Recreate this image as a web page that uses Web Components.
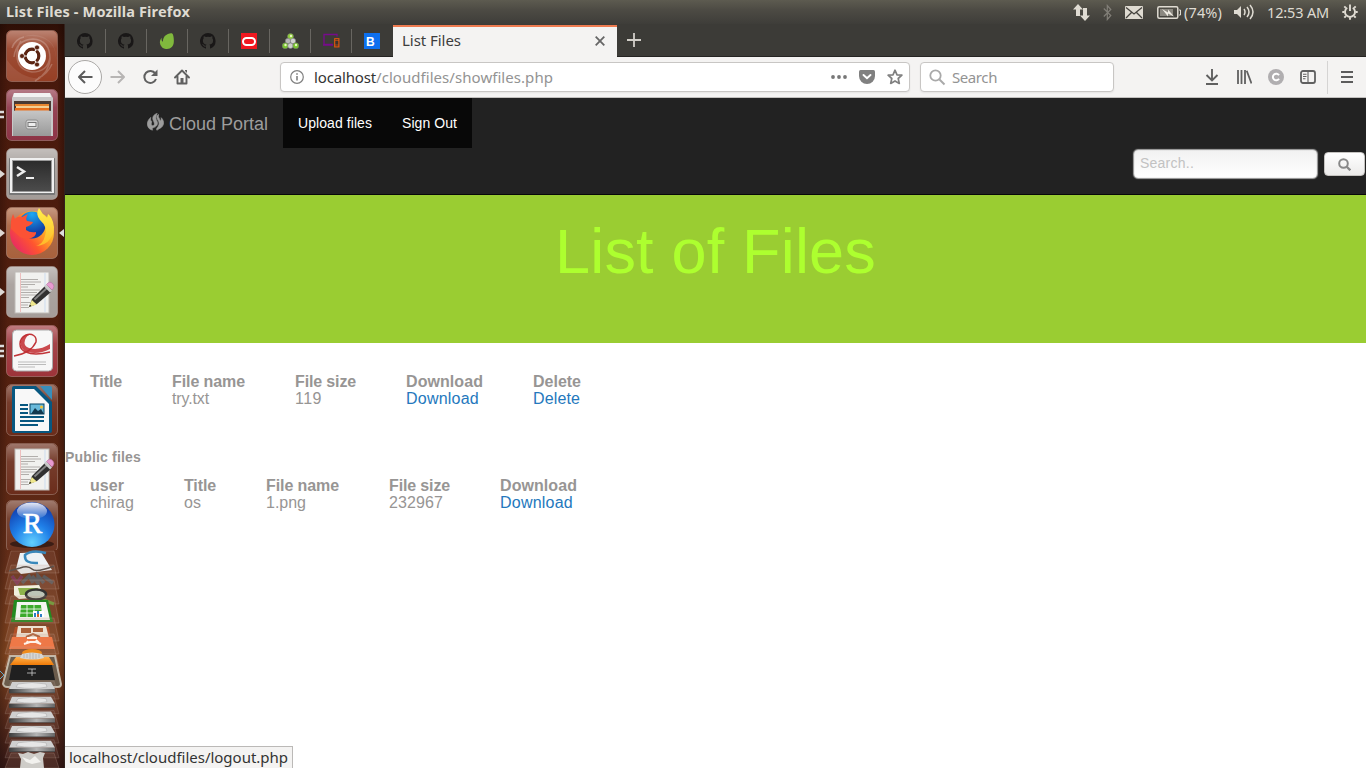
<!DOCTYPE html>
<html lang="en">
<head>
<meta charset="utf-8">
<title>List Files</title>
<style>
html,body{margin:0;width:1366px;height:768px;overflow:hidden;background:#fff}
</style>
</head>
<body>
<desk-top></desk-top>
<script>
const define = (name, html, init) => {
  const t = document.createElement('template');
  t.innerHTML = html;
  customElements.define(name, class extends HTMLElement {
    connectedCallback() {
      if (this.shadowRoot) return;
      this.attachShadow({mode: 'open'}).append(t.content.cloneNode(true));
      if (init) init.call(this, this.shadowRoot);
    }
  });
};

/* Text tracked so that it fills the width given in its "w" attribute. */
define('fit-text', `<style>:host{display:block;white-space:pre;flex:none}span{display:inline-block}</style><span><slot></slot></span>`, function (r) {
  const w = +this.getAttribute('w'), s = r.querySelector('span');
  this.style.width = w + 'px';
  s.style.letterSpacing = (w - s.getBoundingClientRect().width) / this.textContent.length + 'px';
});

const github = '<path fill="#191717" fill-rule="evenodd" d="M8 0a8 8 0 0 0-2.5 15.6c.4.1.5-.2.5-.4v-1.6c-2.2.5-2.7-1-2.7-1-.4-.9-.9-1.1-.9-1.1-.7-.5.1-.5.1-.5.8.1 1.200.8 1.200.8.7 1.300 1.900.9 2.300.7.1-.5.3-.9.5-1.100-1.800-.2-3.600-.9-3.600-4 0-.9.3-1.600.8-2.100-.1-.2-.4-1 .1-2.100 0 0 .7-.2 2.200.8a7.600 7.600 0 0 1 4 0c1.500-1 2.200-.8 2.200-.8.4 1.100.2 1.900.1 2.100.5.6.8 1.300.8 2.100 0 3.100-1.900 3.700-3.700 3.900.3.3.6.8.6 1.500v2.200c0 .2.1.5.5.4A8 8 0 0 0 8 0z"/>';
const paper = `<rect x="15" y="6" width="34" height="41" fill="#f1f1ef" stroke="#bdbab6"/><path d="M20.500 7v39" stroke="#eba9a9" stroke-width=".7"/><path d="M45 7v39" stroke="#bcd3f0" stroke-width=".7"/><path d="M21 13.500h17M21 16h20M21 18.500h14M21 21h7M21 24h19M21 26.500h16M21 29h20M21 31.500h8M21 36.500h9M21 39h7M21 41.500h8" stroke="#b1aeab" stroke-width="1.200"/><path d="M29 41l3-8 13-13 6 6-14 12z" fill="#303030"/><path d="M34.500 33.500l12.500-11.500" stroke="#858585" stroke-width="1.800"/><path d="M29 41l2.800-7 5 4.500z" fill="#efe78c"/><path d="M29 41l1-2.500 1.500 1.500z" fill="#222"/><path d="M44 20.500l2-2 6 6-2 2z" fill="#c9c9c9"/><path d="M46.500 18.500q3-4 6-1t-.5 6.500z" fill="#e79ad0" stroke="#b26fa0" stroke-width=".6"/>`;
const tile = (c, k) => `<rect x="6.500" y=".5" width="51" height="51" rx="5" fill="${c}" stroke="#fff" stroke-opacity=".25"/><rect x="7" y="1" width="50" height="50" rx="5" fill="url(#sh)"/>${k}`;
const pipsOne = '<path d="M0 22l5 4-5 4z" fill="#ddd8d4"/>';
const defs = `<defs><linearGradient id="sh" x2="0" y2="1"><stop stop-color="#fff" stop-opacity=".35"/><stop offset=".35" stop-color="#fff" stop-opacity=".08"/><stop offset="1" stop-color="#fff" stop-opacity="0"/></linearGradient><linearGradient id="gy" x2="0" y2="1"><stop stop-color="#c6c6c6"/><stop offset="1" stop-color="#999"/></linearGradient><linearGradient id="fx" x1="1" x2="0" y2=".8"><stop stop-color="#ffe63d"/><stop offset=".35" stop-color="#ffae24"/><stop offset=".65" stop-color="#ff552f"/><stop offset="1" stop-color="#e5256a"/></linearGradient><linearGradient id="fl" x2="0" y2="1"><stop stop-color="#fff14d"/><stop offset="1" stop-color="#ffb728"/></linearGradient><radialGradient id="fb" cx=".5" cy=".1" r="1"><stop stop-color="#1aa9f4"/><stop offset=".7" stop-color="#123fa5"/></radialGradient><radialGradient id="rb" cx=".5" cy=".9" r=".85"><stop stop-color="#62d0ff"/><stop offset=".5" stop-color="#1f7fe8"/><stop offset="1" stop-color="#123fae"/></radialGradient><linearGradient id="rg" x2="0" y2="1"><stop stop-color="#fff" stop-opacity=".9"/><stop offset="1" stop-color="#fff" stop-opacity=".05"/></linearGradient><linearGradient id="dk" x2="0" y2="1"><stop stop-color="#2b2b2b"/><stop offset="1" stop-color="#4c4c4c"/></linearGradient><linearGradient id="dv"><stop stop-color="#3d3d3d"/><stop offset=".6" stop-color="#b5b5b5"/><stop offset="1" stop-color="#666"/></linearGradient><linearGradient id="og" x2="0" y2="1"><stop stop-color="#ffb04a"/><stop offset="1" stop-color="#ee7a08"/></linearGradient></defs>`;

let drives = '';
for (let i = 0; i < 5; i++) {
  const y = 133 + i * 14.700;
  drives += `<path d="M11 ${y - 2}L54 ${y - 2}L59 ${y + 16}H5z" fill="#a78a80" fill-opacity=".14" stroke="#bda79f" stroke-opacity=".3" stroke-width=".7"/><path d="M12 ${y - 1}H51L55 ${y + 6}H9z" fill="#cfcfcf"/><path d="M18 ${y + 1}q14-3 28 0l1 3q-14 3-31 0z" fill="#e6e6e6" stroke="#adadad" stroke-width=".6"/><path d="M9 ${y + 6}H55v4H9z" fill="url(#dv)"/><path d="M9 ${y + 9.500}H55v.7H9z" fill="#444"/>`;
}
const shelf = (y, h) => `<path d="M11 ${y}H54L59 ${y + h}H5z" fill="#b48a78" fill-opacity=".16" stroke="#c9a99b" stroke-opacity=".3" stroke-width=".8"/>`;

const ICONS = {
  github: [16, 16, github],
  envato: [16, 16, '<path fill="#80b93d" d="M13.200.4C12-.4 8 .6 5.800 3 4 5 3.900 8 3.900 8.600c-.1.3-.4.200-.8-.5C2.400 7 2.500 6 2.800 4.800 1.400 6.300.8 8 .9 9.800A6.600 6.600 0 0 0 8 16c4 0 6.600-3 6.800-7C15 5.500 14.500 1.200 13.200.4z"/>'],
  oracle: [16, 16, '<path fill="#f01820" d="M0 0h16v16H0z"/><rect x="2" y="5" width="12" height="7" rx="3.500" fill="none" stroke="#fff" stroke-width="2"/>'],
  balls: [17, 16, '<g stroke="#777" stroke-width=".5"><circle cx="8.500" cy="3.500" r="3" fill="#8fce3c"/><circle cx="6" cy="8" r="2.700" fill="#b5b5b5"/><circle cx="11" cy="8" r="2.700" fill="#d0d0d0"/><circle cx="3.200" cy="12.800" r="3" fill="#79c52f"/><circle cx="8.500" cy="12.800" r="2.700" fill="#ccc"/><circle cx="13.800" cy="12.800" r="3" fill="#79c52f"/></g><g fill="#e6f7bd"><circle cx="9" cy="3" r="1.200"/><circle cx="3.500" cy="12" r="1.200"/><circle cx="14" cy="12" r="1.200"/></g>'],
  devices: [17, 15, '<path fill="none" stroke="#770b8c" stroke-width="1.300" d="M10 11.500H1V1.500h13v2M0 12h10"/><rect x="11.700" y="5.700" width="4.200" height="8.200" fill="#38332e" stroke="#e5570c" stroke-width="1.100"/><path d="M12 7.500h4M12 12h4" stroke="#e5570c" stroke-width=".6"/>'],
  plus: [14, 14, '<path d="M7 0v14M0 7h14" stroke="#d2cfc9" stroke-width="1.800"/>'],
  close: [10, 10, '<path d="M.7.7l8.600 8.600M9.300.7L.7 9.300" stroke="#666" stroke-width="1.800"/>'],
  back: [16, 14, '<path d="M8 1L2 7l6 6M2 7h13.500" fill="none" stroke="#5c5c5c" stroke-width="2" stroke-linejoin="round"/>'],
  fwd: [16, 14, '<path d="M8 1l6 6-6 6M14 7H.5" fill="none" stroke="#b7b5b4" stroke-width="2" stroke-linejoin="round"/>'],
  reload: [16, 16, '<path d="M13.300 4.500A6 6 0 1 0 14 10" fill="none" stroke="#606060" stroke-width="2"/><path d="M15.500.5v6.500H9z" fill="#606060"/>'],
  home: [16, 16, '<path d="M1 8.500L8 1.500l7 7M3.500 7.500v7h9v-7" fill="none" stroke="#606060" stroke-width="1.900" stroke-linejoin="round" stroke-linecap="round"/><path d="M6.500 9h3v6h-3zM11 1h2v3l-2-2z" fill="#606060"/>'],
  info: [14, 14, '<circle cx="7" cy="7" r="6.300" fill="none" stroke="#808080" stroke-width="1.200"/><path d="M7 6v4.500M7 3.200v1.500" stroke="#808080" stroke-width="1.600"/>'],
  dots: [16, 4, '<g fill="#777"><circle cx="2" cy="2" r="1.900"/><circle cx="8" cy="2" r="1.900"/><circle cx="14" cy="2" r="1.900"/></g>'],
  pocket: [16, 14, '<path d="M1.500 0h13Q16 0 16 1.500V6a8 8 0 0 1-16 0V1.500Q0 0 1.500 0z" fill="#808080"/><path d="M4.500 5L8 8.300 11.500 5" fill="none" stroke="#fff" stroke-width="1.900" stroke-linecap="round"/>'],
  star: [16, 16, '<path d="M8 1.200l2 4.600 4.900.4-3.700 3.300 1.100 4.900L8 11.900l-4.300 2.500 1.100-4.900L1.100 6.200 6 5.800z" fill="none" stroke="#808080" stroke-width="1.700" stroke-linejoin="round"/>'],
  mag: [17, 17, '<circle cx="6.500" cy="6.500" r="5.200" fill="none" stroke="#a9a9a9" stroke-width="1.800"/><path d="M10.500 10.500l5 5" stroke="#a9a9a9" stroke-width="2"/>'],
  down: [14, 16, '<path d="M7 0v11M1.500 6L7 11.500 12.500 6M1 15h12" fill="none" stroke="#606060" stroke-width="1.900"/>'],
  lib: [16, 14, '<path d="M2 0v14M5.500 0v14M9 0v14" stroke="#606060" stroke-width="1.800"/><path d="M10.700 .8L15.500 13.500" stroke="#606060" stroke-width="1.800"/>'],
  sync: [16, 16, '<circle cx="8" cy="8" r="8" fill="#b0aeb0"/><path d="M11 6.300A3.300 3.300 0 1 0 11 9.700" fill="none" stroke="#fff" stroke-width="2"/>'],
  side: [16, 14, '<rect x="1" y="1" width="14" height="12" rx="2" fill="none" stroke="#606060" stroke-width="1.800"/><path d="M8 1v12M3 4.200h3.500M3 6.500h3.500M3 8.800h2.500" stroke="#606060" stroke-width="1.100"/>'],
  menu: [12, 12, '<path d="M0 1h12M0 6h12M0 11h12" stroke="#5c5c5c" stroke-width="1.800"/>'],
  net: [17, 17, '<path fill="#dfdbd2" d="M5 0l5 5.500H7V12H3V5.500H0zM12 17l5-5.500h-3V4h-4v7.500H7z"/>'],
  bt: [9, 17, '<path d="M.8 4.500l7 7-3.500 4v-14l3.500 4-7 7" fill="none" stroke="#827f78" stroke-width="1.200"/>'],
  mail: [18, 13, '<rect width="18" height="13" rx="1" fill="#dfdbd2"/><path d="M1 1.500l8 6.500 8-6.500M1 12l5.500-5.500M17 12l-5.500-5.500" fill="none" stroke="#45433e" stroke-width="1.300"/>'],
  batt: [24, 13, '<rect x=".8" y=".8" width="20" height="11.400" rx="1.500" fill="none" stroke="#dfdbd2" stroke-width="1.500"/><rect x="3" y="3" width="13" height="7" fill="#8b8880"/><path d="M22 4h1.500v5H22" stroke="#dfdbd2" fill="none"/><path d="M5 3l6 3.500V3.500l6 7-6-3v3z" fill="#eeeae1"/>'],
  vol: [20, 18, '<path d="M0 7h3l4-4v12l-4-4H0z" fill="#dfdbd2"/><path d="M10 6q2 3 0 6M13 4q4 5 0 10M16 2q6 7 0 14" fill="none" stroke="#dfdbd2" stroke-width="1.500"/>'],
  gear: [18, 18, '<path d="M6.200 4.800a5 5 0 1 0 5.600 0M9 1.500v6.500" fill="none" stroke="#dfdbd2" stroke-width="1.900"/><path d="M4.800 4.800L3.300 3.300M13.200 4.800l1.500-1.500M3.500 9H1.300M14.500 9h2.200M5 13l-1.700 1.700M13 13l1.700 1.700M9 14.500v2.200" stroke="#dfdbd2" stroke-width="1.900"/>'],
  fire: [17, 18, '<g fill="#9d9d9d" stroke="#9d9d9d" stroke-width=".7" stroke-linejoin="round"><path d="M10.200.4C6.800 1.500 5 4 6.200 7.200 7.300 9.500 8 11 7 12.200c-1 1-2.600.6-2.800-.9-.1-1 .2-1.900.6-2.600C3.400 8 3.300 6 3.800 4.500 1.300 6.500.1 9 .5 12c.4 3 2.500 4.800 5.200 5.100-1-1-.6-2 .9-2.500 3-.9 4.500-3 3.600-6C9.300 6.400 7.800 4.800 10.200.4z"/><path d="M9.800 4.200c.3 2.300 2 3.200 2.300 5.800.3 3-2 4.300-2.500 6-.1.600.1.900.5 1.300.3-.5.9-1 1.900-1.500 3.200-1.300 4.800-3.800 4.500-6.600-.3-2-1.100-3.300-2.300-4.500.2 1.500 0 2.600-1.100 3.200C13 5.500 10.600 4.500 11.500 1.500 10.300 2.300 9.700 3 9.800 4.200z"/></g>'],
  find: [13, 13, '<circle cx="5.500" cy="5.500" r="4.300" fill="none" stroke="#888" stroke-width="2"/><path d="M8.700 8.700l3.600 3.600" stroke="#888" stroke-width="2.300"/>'],
  ubuntu: [65, 52, tile('#963f25', '<g fill="none" stroke="#fff" stroke-opacity=".22" stroke-width="1.500"><path d="M14 27Q16 10 33 9q17 1 17 20-1 14-15 22M50 27q-2 15-18 15-15-2-15-17 0-8 4-14M12 18q3-9 12-11M52 34q-5 11-14 14"/></g><path d="M7 30q14 20 35 18l-6 3H12q-5 0-5-5zM22 7q19-7 31 8 4 8 3 18 1-18-11-24-10-5-23-2z" fill="#fff" fill-opacity=".09"/><circle cx="32" cy="26" r="14" fill="#fff"/><circle cx="32" cy="26" r="6.800" fill="none" stroke="#5b2412" stroke-width="3.200"/><path d="M32 26H19M32 26l7-11M32 26l7 11" stroke="#fff" stroke-width="1.200"/><circle cx="32" cy="26" r="5" fill="#fff"/><g fill="#5b2412" stroke="#fff" stroke-width=".7"><circle cx="22" cy="26" r="2.500"/><circle cx="37" cy="17.500" r="2.500"/><circle cx="37" cy="34.500" r="2.500"/></g>')],
  files: [65, 52, tile('#8d3446', '<path d="M14 4h36l3 5v38H12V9z" fill="#c9c9c9"/><path d="M14 4h36l1 4H13z" fill="#f2f2f2"/><path d="M14 12h37v12H14z" fill="#493a33"/><path d="M15 15h34v2H15z" fill="#e88630"/><path d="M16 17h33v2H16z" fill="#f4cf93"/><path d="M15 19h34v4H15z" fill="#e8701d"/><path d="M13 22l3-.5h32l3 .5v25H13z" fill="url(#gy)"/><rect x="26" y="31" width="12" height="9" rx="2" fill="#d9d9d9" stroke="#8d8d8d"/><rect x="28" y="33.500" width="8" height="4" fill="#eee" stroke="#777"/>') + '<path d="M0 23h4M0 28h4" stroke="#ddd" stroke-width="2.500"/>'],
  term: [65, 52, tile('#a39c98', '<rect x="9" y="10" width="46" height="37" rx="1" fill="#777"/><rect x="10" y="10" width="44" height="35" fill="#f0f0f0"/><rect x="12.500" y="12.500" width="39" height="31" fill="url(#dk)" stroke="#999"/><path d="M17 19l7 4.500-7 4.500" fill="none" stroke="#eee" stroke-width="2.500"/><path d="M26 30h8" stroke="#eee" stroke-width="2"/>') + pipsOne],
  firefox: [65, 52, tile('#a8613d', '<circle cx="32" cy="26" r="22" fill="url(#fx)"/><circle cx="32" cy="18" r="13.500" fill="url(#fb)"/><path d="M13 7l2 5q3-3 7-2l6-3q-3 5-1 7l6 1q-1 3-7 5v3q4 3 10 2 1 5-8 7-5 0-8-2l-9-8q-1-8 2-15z" fill="#fb5235"/><path d="M39 1q-4 6 1 12 8 7 5 16-2 8-9 10 10-1 14-7 6-7 3-17-2-6-5-8l-1 4q-5-4-8-10z" fill="url(#fl)"/>') + pipsOne + '<path d="M64 22l-5 4 5 4z" fill="#ddd"/>'],
  edit: [65, 52, tile('#a59d99', paper) + pipsOne],
  pdf: [65, 52, tile('#9d343a', '<rect x="12.500" y="5" width="40" height="41" rx="4" fill="#f7f7f7" stroke="#aaa"/><path d="M14 31Q31 28 36 17c1-6-4-9-10-7-8 4-8 14 0 17q8 4 24 0" fill="none" stroke="#c03539" stroke-width="1.500"/><path d="M33 10q-9-3-12 6-2 9 7 11 10 3 22-3v-5q-11 7-21 4-6-2-4-8 2-6 8-5z" fill="#c22c30" opacity=".85"/><path d="M18 37h28M18 39.500h28M18 42h17" stroke="#bbb"/>') + '<path d="M0 21h4M0 26h4M0 31h4" stroke="#ddd" stroke-width="2.500"/>'],
  writer: [65, 52, tile('#6b2c1a', '<path d="M14 2h22l16 16v29q0 2-2 2H14q-2 0-2-2V4q0-2 2-2z" fill="#075780"/><path d="M15 5h19l15 15v27H15z" fill="#f8f8f8"/><path d="M40 2h10q2 0 2 2v12z" fill="#398eba"/><path d="M20 21h8M20 25h8M20 29h8M20 33h24M20 37h24M20 41h18" stroke="#075780" stroke-width="2"/><rect x="30" y="20" width="14" height="10" fill="#69b9da" stroke="#074564"/><path d="M31 30l4-6 3 3 3-2 3 5z" fill="#12384e"/><circle cx="41.500" cy="23" r="1.500" fill="#f6c12f"/>')],
  edit2: [65, 52, tile('#6b2d1b', paper)],
  rstudio: [65, 50, tile('#6c3320', '') + '<ellipse cx="32" cy="44" rx="22" ry="4" fill="#3b1d15"/><circle cx="32" cy="24.500" r="22.500" fill="url(#rb)"/><ellipse cx="32" cy="11" rx="15" ry="8.500" fill="url(#rg)"/><text x="32.500" y="33" font-family="Liberation Serif,serif" font-size="29" fill="#fff" stroke="#fff" stroke-width=".7" text-anchor="middle">R</text>'],
  stack: [65, 218, shelf(1, 22) + '<path d="M20 3l21-1 11 18-31 4-5-5z" fill="#edf2f5"/><path d="M46 3q-14-4-21 2-1 9 13 8" fill="none" stroke="#3988bb" stroke-width="2.500"/><path d="M9 21l11-3q8-3 12 1t22-3" fill="none" stroke="#4c4743" stroke-width="1.600"/>' + shelf(15, 24) + '<path d="M12 26l5 7 5-7M22 33l7-7 4 7M32 26l6 7v-7l6 7M43 26l10 7" fill="none" stroke="#5d5b5c" stroke-width="3.500"/><path d="M12 26l5 7 5-7" fill="none" stroke="#843853" stroke-width="3"/>' + shelf(30, 24) + '<path d="M14 36l25-1 6 12-26 2-5-4z" fill="#f1efdc"/><path d="M18 38h20l4 7H20z" fill="#8eb34b"/><path d="M41 49l13 5" stroke="#6c9d36" stroke-width="3"/><ellipse cx="36" cy="44.500" rx="10" ry="5" fill="#bdc5b8" stroke="#333" stroke-width="2.500"/>' + shelf(46, 27) + '<path d="M14 50h34l5 22H11z" fill="#238a20"/><path d="M17 52h29l4 18H15z" fill="#f4f6f1"/><path d="M21 55h20l1 12H20z" fill="#3caa2b"/><path d="M20 59h21M20 63h22M27 55v12M34 55v12" stroke="#fff" stroke-width=".8"/><path d="M33 61h11v6H33z" fill="#fff"/><path d="M35 67v-4M38 67v-6M41 67v-3" stroke="#2c7fc6" stroke-width="2"/><path d="M38 67v-3" stroke="#d36425" stroke-width="2"/>' + shelf(68, 23) + '<path d="M15 77h34l2 13H12z" fill="#b04f27"/><path d="M18 76h28l3 12H16z" fill="#eee2d2"/><path d="M21 78h10v5H21zM33 78h10v4H33z" fill="#ac6037"/><path d="M26 87l7-3 7 3" fill="none" stroke="#ae6037" stroke-width="2"/>' + shelf(84, 20) + '<path d="M12 87h40l3 12H9z" fill="#ee7847"/><path d="M24 94l6-2 6 0 5 2M27 88h10M28 91l-2 3M36 90l3 3" fill="none" stroke="#fff2e8" stroke-width="2.200"/>' + shelf(97, 20) + '<path d="M10 106h45l6 28q0 3-3 3H7q-3 0-4-3z" fill="#6b5c4c" stroke="#dedbce" stroke-width="2" stroke-opacity=".75"/><path d="M12 115h40l3 15H9z" fill="#202020"/><path d="M16 107h33l5 8H10z" fill="url(#og)"/><ellipse cx="32" cy="103" rx="10" ry="4" fill="#ef8c1d"/><path d="M22 104q10-3 20 0l2 4q-11 3-24 0z" fill="#d6d6d4"/><path d="M24 104v4M27 104v4M30 103v6M33 103v6M36 104v5M39 104v4" stroke="#aaa" stroke-width=".7"/><path d="M28 119h8M32 119v7M27 123h9" stroke="#ccc" stroke-width=".8"/><path d="M0 121l4 4-4 4" stroke="#60a6c5" fill="none"/>' + drives + shelf(203, 15) + '<path d="M18 203l5 1 5-2 6 2 6-2 5 1-2 5 1 10H20l1-9z" fill="#ceccc8"/><path d="M22 207l8 3 5-4 6 6-9 2-6-2z" fill="#f2f1ee"/>']
};

define('ui-icon', `<style>:host{display:block;flex:none;line-height:0}svg{display:block}</style>`, function (r) {
  const [w, h, d] = ICONS[this.getAttribute('name')];
  const box = document.createElement('div');
  box.innerHTML = `<svg width="${w}" height="${h}" viewBox="0 0 ${w} ${h}">${w === 65 ? defs : ''}${d}</svg>`;
  r.append(box.firstChild);
});

define('top-panel', `<style>
:host{display:flex;align-items:center;height:24px;padding:0 7px 0 6px;box-sizing:border-box;background:linear-gradient(#5d5b50,#4d4b44 40%,#3e3d39);color:#dfdbd2;font:15px "Noto Sans",sans-serif;line-height:24px}
.t{font-weight:700;font-size:14.500px;margin-right:auto;margin-top:-2px}
ui-icon{margin-left:12px}
.p{font-size:14.500px;margin-top:-1px}
</style><fit-text class="t" w="184">List Files - Mozilla Firefox</fit-text>
<ui-icon name="net"></ui-icon><ui-icon name="bt" style="margin-left:13px"></ui-icon><ui-icon name="mail" style="margin-left:13px"></ui-icon><ui-icon name="batt" style="margin-left:14px"></ui-icon><fit-text class="p" w="38" style="margin-left:3px">(74%)</fit-text><ui-icon name="vol"></ui-icon><fit-text class="p" w="62" style="margin-left:13px">12:53 AM</fit-text><ui-icon name="gear"></ui-icon>`);

define('app-launcher', `<style>
:host{display:flex;flex-direction:column;width:65px;box-sizing:border-box;padding-top:6px;gap:7px;background:linear-gradient(90deg,#0003,transparent 8px 57px,#0004),linear-gradient(#2e0f06,#48190c 7%,#54200f 50%,#632d18 72%,#80441f 85%,#582a1a 93%,#351815);overflow:hidden;box-shadow:inset -1px 0 #32221d}
</style>${['ubuntu','files','term','firefox','edit','pdf','writer','edit2'].map(n => `<ui-icon name="${n}"></ui-icon>`).join('')}<ui-icon name="rstudio" style="margin-top:-2px"></ui-icon><ui-icon name="stack" style="margin-top:-7px"></ui-icon>`);

define('pinned-tab', `<style>:host{display:flex;align-items:center;justify-content:center;width:41px;height:32px;box-sizing:border-box;position:relative;padding:1px 1px 0 0}i{position:absolute;right:0;top:5px;width:1px;height:24px;background:#686661}:host([last]) i{display:none}</style><slot></slot><i></i>`);

define('tab-strip', `<style>
:host{display:flex;height:33px;box-sizing:border-box;background:#3c3b37;border-bottom:1px solid #252422}
.a{display:flex;align-items:center;width:224px;height:32px;padding:0 12px 0 9px;box-sizing:border-box;background:#f4f3f2;border-top:2px solid #ee7b50;margin:1px 0 -1px;font:15px "Noto Sans",sans-serif;color:#3d3d3d;justify-content:space-between}
.a fit-text{margin-top:-4px}
.a ui-icon{margin-top:-2px}
.b{display:flex;align-items:flex-end;padding:0 0 0 2px;box-sizing:border-box;width:16px;height:16px;background:#0d6fee;color:#fff;font:bold 12px/13px "Liberation Sans",sans-serif}
.plus{margin:9px 0 0 10px}
</style>
<pinned-tab><ui-icon name="github"></ui-icon></pinned-tab><pinned-tab><ui-icon name="github"></ui-icon></pinned-tab><pinned-tab><ui-icon name="envato"></ui-icon></pinned-tab><pinned-tab><ui-icon name="github"></ui-icon></pinned-tab><pinned-tab><ui-icon name="oracle"></ui-icon></pinned-tab><pinned-tab><ui-icon name="balls"></ui-icon></pinned-tab><pinned-tab><ui-icon name="devices"></ui-icon></pinned-tab><pinned-tab last><span class="b">B</span></pinned-tab>
<div class="a"><fit-text w="59">List Files</fit-text><ui-icon name="close"></ui-icon></div><ui-icon class="plus" name="plus"></ui-icon>`);

define('nav-toolbar', `<style>
:host{display:flex;align-items:center;height:41px;box-sizing:border-box;background:#f4f3f2;border-bottom:1px solid #c2c0be;font:15px "Noto Sans",sans-serif;color:#333;padding-left:3px}
.back{display:grid;place-items:center;width:34px;height:34px;box-sizing:border-box;border:1px solid #aaa8a6;border-radius:50%;background:#fcfcfc}
.f{display:flex;align-items:center;height:30px;box-sizing:border-box;background:#fff;border:1px solid #c8c6c4;border-radius:4px;box-shadow:0 1px 2px #0001}
.g{color:#939393}
.sep{width:1px;height:33px;background:#d5d4d3}
</style>
<div class="back"><ui-icon name="back"></ui-icon></div><ui-icon name="fwd" style="margin-left:8px"></ui-icon><ui-icon name="reload" style="margin-left:16px"></ui-icon><ui-icon name="home" style="margin-left:16px"></ui-icon>
<div class="f" style="width:630px;margin-left:90px;padding:0 6px 0 9px"><ui-icon name="info"></ui-icon><fit-text w="62" style="margin-left:10px">localhost</fit-text><fit-text class="g" w="177" style="margin-right:auto">/cloudfiles/showfiles.php</fit-text><ui-icon name="dots"></ui-icon><ui-icon name="pocket" style="margin-left:12px"></ui-icon><ui-icon name="star" style="margin-left:12px"></ui-icon></div>
<div class="f" style="width:194px;margin-left:10px;padding-left:8px"><ui-icon name="mag"></ui-icon><fit-text class="g" w="45" style="margin-left:6px">Search</fit-text></div>
<ui-icon name="down" style="margin-left:91px"></ui-icon><ui-icon name="lib" style="margin-left:17px"></ui-icon><ui-icon name="sync" style="margin-left:16px"></ui-icon><ui-icon name="side" style="margin-left:16px"></ui-icon><div class="sep" style="margin-left:11px"></div><ui-icon name="menu" style="margin-left:13px"></ui-icon>`);

define('site-navbar', `<style>
:host{display:flex;flex-direction:column;height:97px;box-sizing:border-box;background:#222;border-bottom:1px solid #080808;font:14px "Liberation Sans",Arial,sans-serif}
nav{display:flex;height:50px;padding-left:82px}
.brand{display:flex;align-items:center;width:136px;color:#9d9d9d;font-size:18px}
.brand span{margin-left:5px;padding-top:2px}
.brand ui-icon{margin-top:-3px}
a{display:flex;align-items:center;padding:0 15px;background:#080808;color:#fff}
form{display:flex;justify-content:flex-end;align-items:center;margin:1px 0 0;padding-right:1px;gap:6px}
.q{width:185px;height:30px;box-sizing:border-box;border:1px solid #999;border-radius:5px;background:linear-gradient(#f1f1f1,#fff);box-shadow:inset 0 0 1px #888,0 0 1px #aaa;color:#c2c2c2;padding:0 6px;line-height:27px}
.btn{display:grid;place-items:center;width:41px;height:24px;box-sizing:border-box;border:1px solid #c5c3c0;border-radius:4px;background:linear-gradient(#fff,#ecebea)}
</style><nav><div class="brand"><ui-icon name="fire"></ui-icon><span>Cloud Portal</span></div><a><fit-text w="74">Upload files</fit-text></a><a><fit-text w="55">Sign Out</fit-text></a></nav>
<form><div class="q"><fit-text w="54">Search..</fit-text></div><div class="btn"><ui-icon name="find"></ui-icon></div></form>`);

define('page-banner', `<style>:host{display:block;height:148px;box-sizing:border-box;padding-top:20px;background:#9acd32;color:#adff2f;text-align:center;font:63px/72px "Liberation Sans",Arial,sans-serif}fit-text{margin:0 auto}</style><fit-text w="321">List of Files</fit-text>`);

/* Cells are "text:width", the width being that of the text's advance. */
define('file-table', `<style>
:host{display:block;color:#979594;font:16px/17px "Liberation Sans",Arial,sans-serif}
table{border-collapse:collapse}th,td{padding:0 25px;text-align:left;height:17px}a{color:#2478bd}
</style><table></table>`, function (r) {
  const rows = this.getAttribute('rows').split('|').map(x => x.split(','));
  r.querySelector('table').innerHTML = rows.map((c, i) => '<tr>' + c.map(x => {
    const [text, w] = x.split(':');
    const cell = text && `<fit-text w="${w}">${text}</fit-text>`;
    return i ? `<td>${/^D/.test(x) ? `<a>${cell}</a>` : cell}</td>` : `<th>${cell}</th>`;
  }).join('') + '</tr>').join('');
});

define('status-tip', `<style>:host{position:absolute;left:0;bottom:0;width:228px;height:22px;box-sizing:border-box;border:1px solid #bbb9b7;border-width:1px 1px 0 0;background:#f4f3f2;color:#333;font:15px/21px "Noto Sans",sans-serif;padding-left:4px}</style><slot></slot>`);

define('web-page', `<style>
:host{display:flex;flex-direction:column;flex:1;position:relative;background:#fff}
h5{margin:42px 0 12px;font:bold 14px/16px "Liberation Sans",Arial,sans-serif;color:#979594}
</style><site-navbar></site-navbar><page-banner></page-banner>
<file-table style="margin-top:30px" rows="Title:32,File name:73,File size:61,Download:77,Delete:48|,try.txt:37,119:27,Download:73,Delete:47"></file-table>
<h5><fit-text w="76">Public files</fit-text></h5>
<file-table rows="user:34,Title:32,File name:73,File size:61,Download:77|chirag:44,os:17,1.png:40,232967:54,Download:73"></file-table>
<status-tip><fit-text w="219">localhost/cloudfiles/logout.php</fit-text></status-tip>`);

define('desk-top', `<style>
:host{display:grid;grid-template:24px 744px/65px 1301px;width:1366px;height:768px;overflow:hidden}
top-panel{grid-column:1/3}
main{display:flex;flex-direction:column;min-width:0}
</style><top-panel></top-panel><app-launcher></app-launcher><main><tab-strip></tab-strip><nav-toolbar></nav-toolbar><web-page></web-page></main>`);
</script>
</body>
</html>
